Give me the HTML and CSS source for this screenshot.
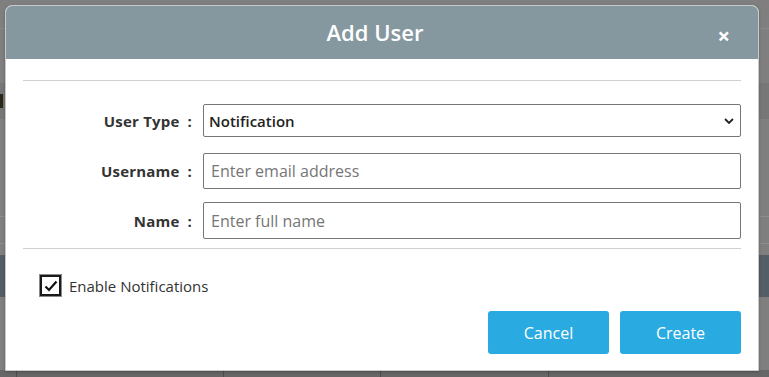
FILE: index.html
```html
<!DOCTYPE html>
<html lang="en">
<head>
    <meta charset="UTF-8">
    <meta name="viewport" content="width=device-width, initial-scale=1.0">
    <title>Add User</title>
    <link rel="stylesheet" href="styles.css">
</head>
<body>
    <div class="page">
        <div class="page-topbar"></div>
        <div class="page-toolbar"><span class="page-mark"></span></div>
        <div class="page-rows">
            <div class="page-row"></div>
            <div class="page-row short"></div>
            <div class="page-row dark"></div>
        </div>
        <div class="page-footer">
            <span class="cell c1"></span>
            <span class="cell c2"></span>
            <span class="cell c3"></span>
            <span class="cell c4"></span>
        </div>
    </div>

    <div class="overlay">
        <div class="modal">
            <div class="modal-header">
                <h1>Add User</h1>
                <span class="close">&times;</span>
            </div>

            <div class="modal-body">
                <hr>
                <form id="addUserForm">
                    <div class="form-row first">
                        <label for="user_type">User Type<span class="colon">:</span></label>
                        <div class="select-wrap">
                            <select id="user_type">
                                <option value="notification">Notification</option>
                                <option value="admin">Admin</option>
                                <option value="standard">Standard</option>
                            </select>
                            <svg class="chevron" viewBox="0 0 10 6" width="10" height="6">
                                <path d="M1 1 L5 5 L9 1" fill="none" stroke="#222" stroke-width="1.8"/>
                            </svg>
                        </div>
                    </div>
                    <div class="form-row second">
                        <label for="username">Username<span class="colon">:</span></label>
                        <input type="email" id="username" placeholder="Enter email address">
                    </div>
                    <div class="form-row last">
                        <label for="full_name">Name<span class="colon">:</span></label>
                        <input type="text" id="full_name" placeholder="Enter full name">
                    </div>
                    <hr>

                    <label class="check-row">
                        <span class="checkbox">
                            <svg viewBox="0 0 16 16" width="16" height="16">
                                <path d="M2.5 8.5 L6 12 L13.5 3.5" fill="none" stroke="#111" stroke-width="2.2"/>
                            </svg>
                        </span>
                        Enable Notifications
                    </label>

                    <div class="actions">
                        <button type="button" class="btn">Cancel</button>
                        <button type="submit" class="btn">Create</button>
                    </div>
                </form>
            </div>
        </div>
    </div>
</body>
</html>
```

FILE: styles.css
```css
* {
    margin: 0;
    padding: 0;
    box-sizing: border-box;
    font-family: 'Open Sans', sans-serif;
}

body {
    background-color: #7f7f7f;
    width: 769px;
    height: 377px;
    overflow: hidden;
    position: relative;
}

/* dimmed page behind the dialog */
.page {
    height: 377px;
    display: flex;
    flex-direction: column;
}

.page-topbar {
    height: 29px;
    border-bottom: 1px solid #8a8a8a;
}

.page-toolbar {
    height: 36px;
    margin-top: 54px;
    background: #777;
    display: flex;
    align-items: center;
}

.page-mark {
    width: 3px;
    height: 14px;
    background: #2a2618;
}

.page-rows {
    flex: 1;
}

.page-row {
    height: 27px;
    border-top: 1px solid #8c8c8c;
    margin-top: 97px;
}

.page-row.short {
    height: 12px;
    margin-top: 0;
}

.page-row.dark {
    height: 42px;
    margin-top: 0;
    border-top: none;
    background: #535e66;
}

.page-footer {
    height: 7px;
    background: #666;
    display: flex;
}

.cell {
    border-left: 1px solid #4c4c4c;
    height: 100%;
}

.c1 { margin-left: 16px; width: 207px; }
.c2 { width: 157px; }
.c3 { width: 168px; }
.c4 { width: 50px; }

/* dialog */
.overlay {
    position: absolute;
    top: 5px;
    left: 5px;
}

.modal {
    width: 754px;
    height: 366px;
    background: white;
    border: 1px solid #c9c9c9;
    border-radius: 7px 7px 0 0;
    box-shadow: 0 1px 3px rgba(0, 0, 0, 0.25);
    overflow: hidden;
}

.modal-header {
    height: 53px;
    background-color: #85979f;
    display: flex;
    align-items: center;
    justify-content: center;
    padding-right: 14px;
    position: relative;
}

.modal-header h1 {
    color: white;
    font-size: 22px;
    font-weight: 600;
    margin-top: -1px;
}

.close {
    position: absolute;
    right: 28px;
    top: 18px;
    color: white;
    font-size: 22px;
    font-weight: 700;
    line-height: 1;
}

.modal-body {
    padding: 21px 17px 0 17px;
}

hr {
    border: none;
    border-top: 1px solid #d0d0d0;
}

.form-row {
    display: grid;
    grid-template-columns: 169px 1fr;
    column-gap: 11px;
    align-items: center;
    margin-top: 13px;
}

.form-row.first {
    margin-top: 23px;
}

.form-row.second {
    margin-top: 16px;
}

.form-row label {
    text-align: right;
    font-size: 15px;
    font-weight: 700;
    color: #333;
    letter-spacing: 0.2px;
}

.colon {
    margin-left: 8px;
}

.select-wrap {
    position: relative;
}

select {
    width: 100%;
    height: 33px;
    padding: 0 5px;
    border: 1px solid #767676;
    border-radius: 2px;
    background: white;
    font-size: 15px;
    font-weight: 600;
    color: #222;
    appearance: none;
}

.chevron {
    position: absolute;
    right: 7px;
    top: 14px;
}

input {
    width: 100%;
    height: 36px;
    padding: 0 7px;
    border: 1px solid #767676;
    border-radius: 2px;
    font-size: 16px;
    font-weight: 500;
    color: #222;
}

input::placeholder {
    color: #767676;
}

.form-row.last input {
    height: 37px;
}

.form-row.last {
    margin-bottom: 9px;
}

.check-row {
    display: flex;
    align-items: center;
    gap: 8px;
    margin: 26px 0 0 17px;
    font-size: 15px;
    color: #333;
}

.checkbox {
    width: 21px;
    height: 21px;
    border: 2px solid #1a1a1a;
    box-shadow: 0 0 0 1px #8a8a8a;
    display: flex;
    align-items: center;
    justify-content: center;
}

.actions {
    display: flex;
    justify-content: flex-end;
    gap: 11px;
    margin-top: 15px;
}

.btn {
    width: 121px;
    height: 43px;
    background-color: #29abe2;
    color: white;
    border: none;
    border-radius: 3px;
    font-size: 16px;
    cursor: pointer;
}
```
